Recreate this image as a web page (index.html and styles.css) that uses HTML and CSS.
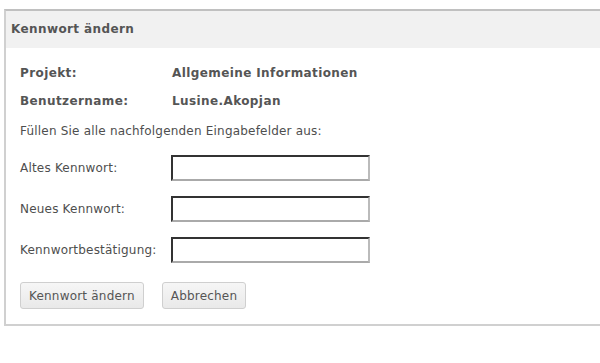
FILE: index.html
```html
<!DOCTYPE html>
<html lang="de">
<head>
<meta charset="utf-8">
<title>Kennwort ändern</title>
<link rel="stylesheet" href="styles.css">
</head>
<body>
<div class="panel">
  <div class="panel-head">Kennwort ändern</div>
  <div class="panel-body">
    <div class="info-row"><span class="info-label">Projekt:</span><span class="info-value">Allgemeine Informationen</span></div>
    <div class="info-row"><span class="info-label">Benutzername:</span><span class="info-value">Lusine.Akopjan</span></div>
    <p class="hint">Füllen Sie alle nachfolgenden Eingabefelder aus:</p>
    <div class="field-row"><label class="field-label">Altes Kennwort:</label><input class="field-input" type="password"></div>
    <div class="field-row"><label class="field-label">Neues Kennwort:</label><input class="field-input" type="password"></div>
    <div class="field-row"><label class="field-label">Kennwortbestätigung:</label><input class="field-input" type="password"></div>
    <div class="actions">
      <button class="btn" type="button">Kennwort ändern</button>
      <button class="btn" type="button">Abbrechen</button>
    </div>
  </div>
</div>
</body>
</html>
```
FILE: styles.css
```css
html, body {
  margin: 0;
  padding: 0;
  background: #fff;
}
body {
  font-family: "DejaVu Sans", Verdana, sans-serif;
  font-size: 12px;
  letter-spacing: 0.2px;
  color: #4a4a4a;
  padding: 9px 0 0 4px;
  overflow: hidden;
}
.panel {
  width: 620px;
  border: 1px solid #c4c4c4;
  border-top: 2px solid #c0c0c0;
  border-left: 2px solid #d0d0d0;
  border-bottom: 2px solid #d0d0d0;
  box-sizing: border-box;
}
.panel-head {
  height: 37px;
  line-height: 37px;
  background: #f1f1f1;
  padding-left: 5px;
  font-weight: bold;
  letter-spacing: 0.4px;
  color: #555;
}
.panel-body {
  padding: 11px 0 15px 14px;
}
.info-row {
  display: flex;
  height: 28px;
  line-height: 28px;
  font-weight: bold;
  letter-spacing: 0.4px;
  color: #555;
}
.info-label {
  width: 152px;
}
.hint {
  margin: 0;
  height: 31px;
  line-height: 33px;
  color: #4e4e4e;
}
.field-row {
  display: flex;
  align-items: center;
  height: 26px;
  margin-top: 15px;
}
.hint + .field-row {
  margin-top: 9px;
}
.field-label {
  width: 151px;
  color: #4e4e4e;
}
.field-input {
  width: 199px;
  height: 26px;
  box-sizing: border-box;
  margin: 0;
  border: 2px solid;
  border-color: #333 #bbb #aaa #333;
  background: #fff;
  padding: 0 3px;
}
.actions {
  display: flex;
  gap: 18px;
  margin-top: 19px;
}
.btn {
  height: 27px;
  font-family: "DejaVu Sans", Verdana, sans-serif;
  font-size: 12px;
  letter-spacing: 0.2px;
  color: #555;
  background: linear-gradient(#f6f6f6, #e9e9e9);
  border: 1px solid #cfcfcf;
  border-radius: 3px;
  padding: 0 8px;
}
```
